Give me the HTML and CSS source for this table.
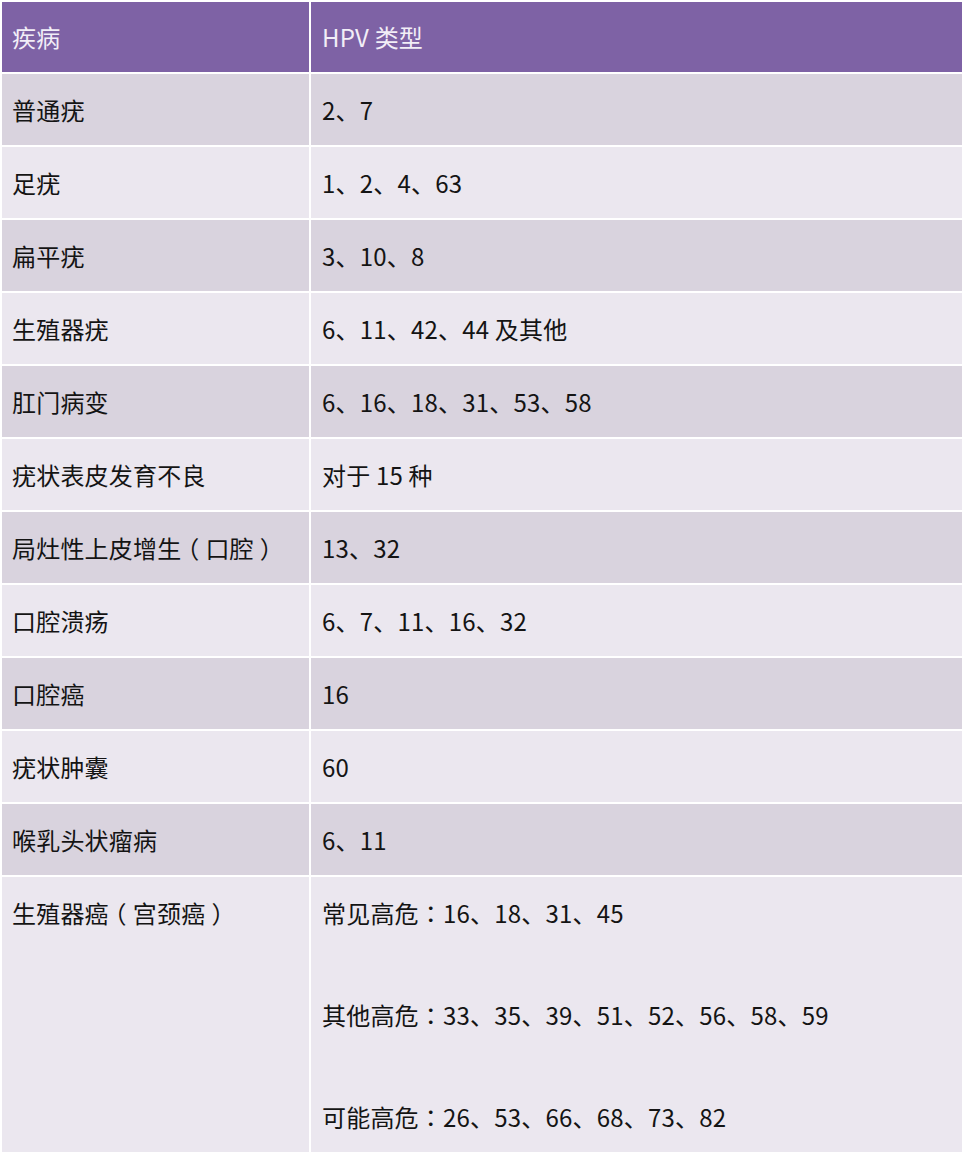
FILE: index.html
```html
<!DOCTYPE html>
<html lang="zh">
<head>
<meta charset="utf-8">
<title>HPV 类型</title>
<link rel="stylesheet" href="styles.css">
</head>
<body>
<div class="table">
  <div class="cell head c1">疾病</div>
  <div class="cell head c2">HPV 类型</div>

  <div class="cell dark c1">普通疣</div>
  <div class="cell dark c2">2、7</div>

  <div class="cell light c1">足疣</div>
  <div class="cell light c2">1、2、4、63</div>

  <div class="cell dark c1">扁平疣</div>
  <div class="cell dark c2">3、10、8</div>

  <div class="cell light c1">生殖器疣</div>
  <div class="cell light c2">6、11、42、44 及其他</div>

  <div class="cell dark c1">肛门病变</div>
  <div class="cell dark c2">6、16、18、31、53、58</div>

  <div class="cell light c1">疣状表皮发育不良</div>
  <div class="cell light c2">对于 15 种</div>

  <div class="cell dark c1">局灶性上皮增<span class="tight">生</span><span class="open">（</span>口腔<span class="close">）</span></div>
  <div class="cell dark c2">13、32</div>

  <div class="cell light c1">口腔溃疡</div>
  <div class="cell light c2">6、7、11、16、32</div>

  <div class="cell dark c1">口腔癌</div>
  <div class="cell dark c2">16</div>

  <div class="cell light c1">疣状肿囊</div>
  <div class="cell light c2">60</div>

  <div class="cell dark c1">喉乳头状瘤病</div>
  <div class="cell dark c2">6、11</div>

  <div class="cell light tall c1">生殖器<span class="tight">癌</span><span class="open">（</span>宫颈癌<span class="close">）</span></div>
  <div class="cell light tall c2 lines">
    <div class="line">常见高危<span class="punct" lang="zh-TW">：</span>16、18、31、45</div>
    <div class="line">其他高危<span class="punct" lang="zh-TW">：</span>33、35、39、51、52、56、58、59</div>
    <div class="line">可能高危<span class="punct" lang="zh-TW">：</span>26、53、66、68、73、82</div>
  </div>
</div>
</body>
</html>
```

FILE: styles.css
```css
html, body {
  margin: 0;
  padding: 0;
  background: #ffffff;
}

body {
  font-family: "Noto Sans CJK SC", "Noto Sans", sans-serif;
  font-size: 24px;
  color: #141414;
}

.table {
  display: grid;
  grid-template-columns: 307px 651px;
  gap: 2px;
  padding: 2px;
  width: max-content;
  background: #ffffff;
}

.cell {
  height: 71px;
  line-height: 71px;
  white-space: nowrap;
  letter-spacing: 0.2px;
}

.punct {
  font-family: "Noto Sans CJK TC", "Noto Sans CJK SC", sans-serif;
}

/* shift fullwidth parentheses towards the centre of their box */
.tight {
  letter-spacing: -6px;
}

.open {
  padding-right: 6px;
}

.close {
  padding-left: 6px;
  letter-spacing: -6px;
}

.c1 {
  padding-left: 10px;
}

.c2 {
  padding-left: 11px;
}

.head {
  height: 70px;
  line-height: 70px;
  background: #7e62a5;
  color: #f2eef7;
}

.dark {
  background: #d9d3de;
}

.light {
  background: #ebe7ef;
}

.tall {
  height: 275px;
}

.lines {
  display: flex;
  flex-direction: column;
  gap: 31px;
}

.line {
  height: 71px;
  line-height: 71px;
}
```
